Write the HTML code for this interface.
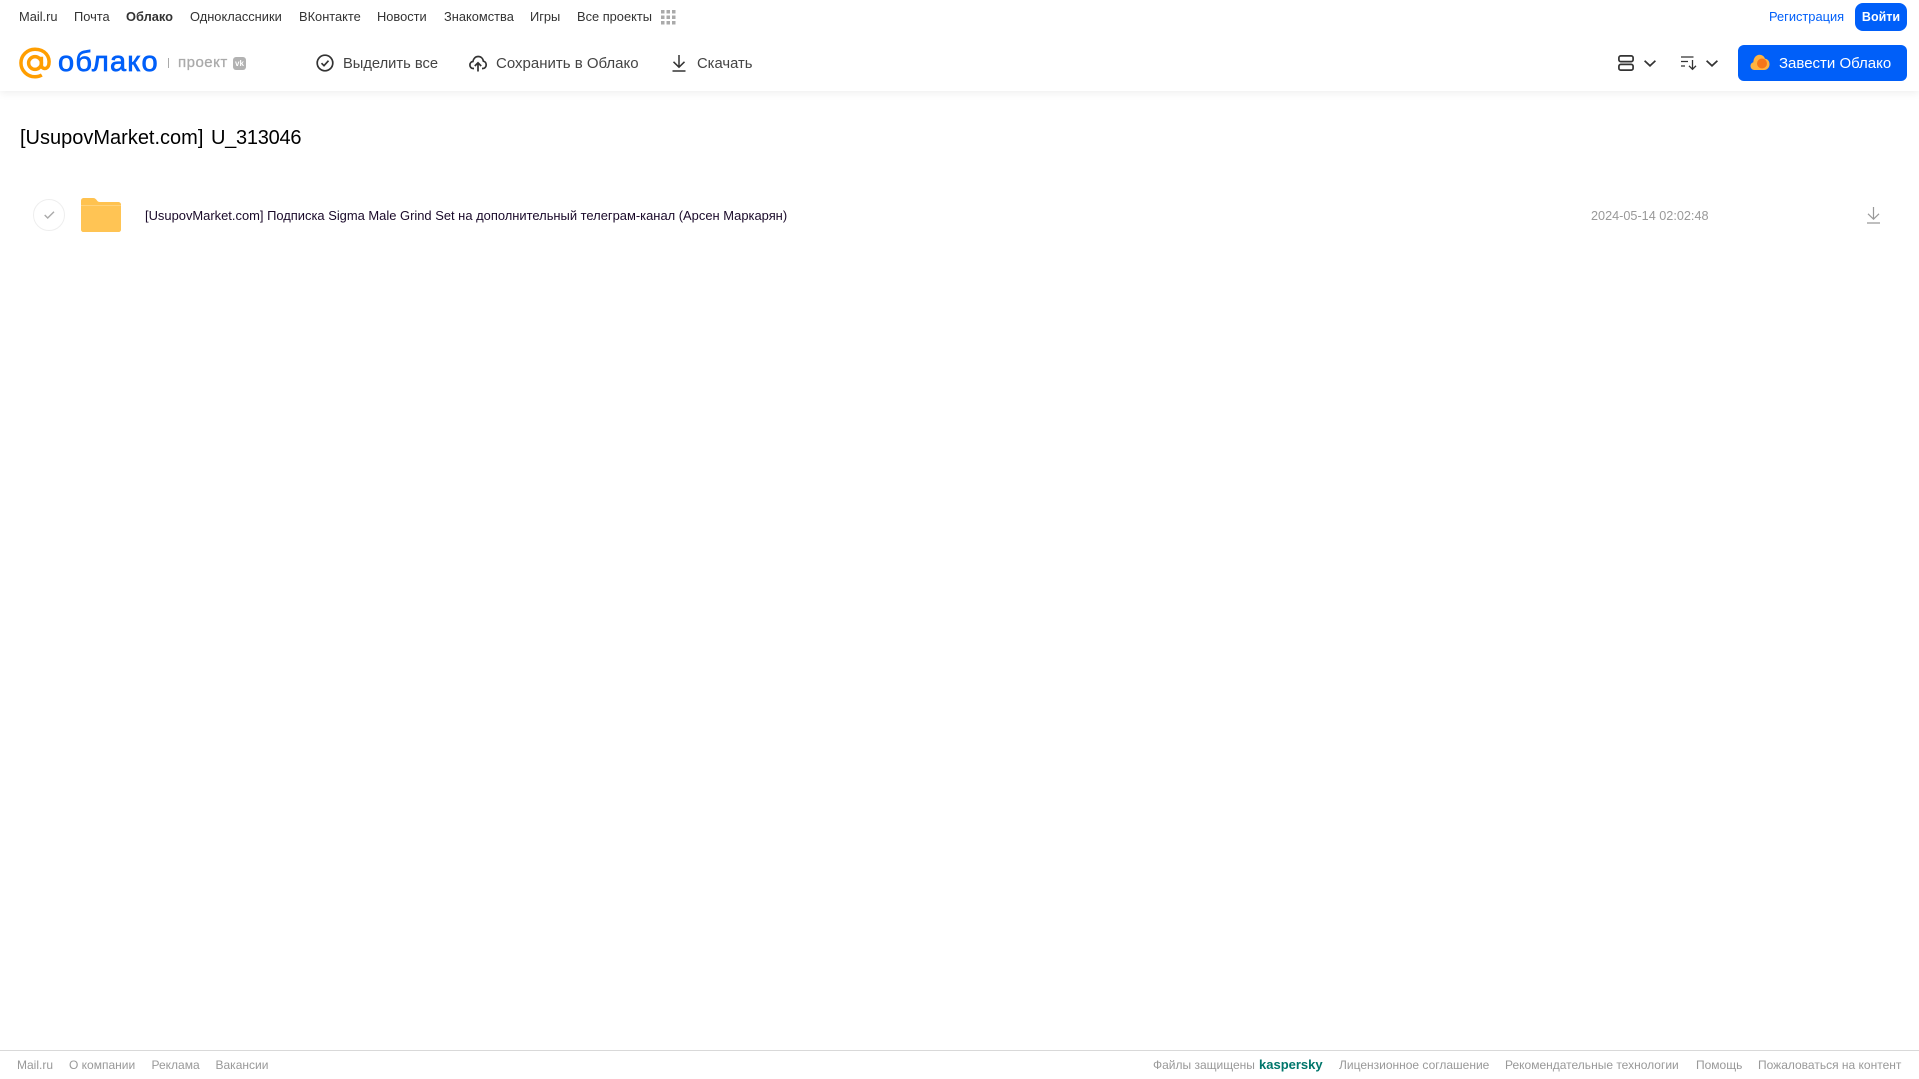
<!DOCTYPE html>
<html lang="ru"><head><meta charset="utf-8"><title>Облако</title>
<style>
html,body{margin:0;padding:0;background:#fff;width:1919px;height:1079px;overflow:hidden}
body{position:relative;font-family:"Liberation Sans",Arial,sans-serif}
.t{position:absolute;white-space:nowrap;line-height:20px}
.n{font-size:12.85px;color:#333;top:7px}
.a{color:#444;top:53.5px}
.f{font-size:12px;color:#999;top:1055px}
svg{position:absolute;overflow:visible}
#hdr{position:absolute;left:0;top:0;width:1919px;height:91px;background:#fff;box-shadow:0 2px 8px rgba(0,0,0,.07)}
.btn{position:absolute;background:#005ff9;color:#fff;text-align:center}
</style></head><body>
<div id="hdr"></div>
<span class="t n" style="left:19px">Mail.ru</span>
<span class="t n" style="left:74px">Почта</span>
<span class="t n" style="left:126px;font-weight:700">Облако</span>
<span class="t n" style="left:190px">Одноклассники</span>
<span class="t n" style="left:299px">ВКонтакте</span>
<span class="t n" style="left:377px">Новости</span>
<span class="t n" style="left:444px">Знакомства</span>
<span class="t n" style="left:530px">Игры</span>
<span class="t n" style="left:577px">Все проекты</span>
<svg style="left:661px;top:10px" width="15" height="15" fill="#aaa"><rect x="0" y="0" width="3.5" height="3.5"/><rect x="5.5" y="0" width="3.5" height="3.5"/><rect x="11" y="0" width="3.5" height="3.5"/><rect x="0" y="5.5" width="3.5" height="3.5"/><rect x="5.5" y="5.5" width="3.5" height="3.5"/><rect x="11" y="5.5" width="3.5" height="3.5"/><rect x="0" y="11" width="3.5" height="3.5"/><rect x="5.5" y="11" width="3.5" height="3.5"/><rect x="11" y="11" width="3.5" height="3.5"/></svg>
<svg style="left:19px;top:47px" width="32" height="32" viewBox="0 0 33 33" fill="none" stroke="#ff9e00" stroke-width="3.6"><circle cx="16.5" cy="16.5" r="6.6"/><path d="M23.1 10v8.5c0 5 6.7 5 7.700-.5 1.400-8-4-15.700-14.300-15.700C8.500 2.300 2 8.700 2 16.500S8.500 30.700 16.500 30.700c2.800 0 5-.6 7-1.800"/></svg>
<span class="t" style="left:58px;top:42px;font-size:29px;line-height:40px;color:#005ff9;letter-spacing:1.2px;-webkit-text-stroke:.7px #005ff9">облако</span>
<div style="position:absolute;left:168px;top:58px;width:1px;height:10px;background:#aaa"></div>
<span class="t" style="left:178px;top:53px;font-size:15px;color:#aaa;letter-spacing:.5px;-webkit-text-stroke:.3px #aaa">проект</span>
<div style="position:absolute;left:233px;top:57px;width:13px;height:13px;border-radius:3px;background:#b2b2b2;color:#fff;font:700 8px/13px 'Liberation Sans',sans-serif;text-align:center">vk</div>
<svg style="left:316px;top:54px" width="18" height="18" fill="none" stroke="#333" stroke-width="1.700"><circle cx="9" cy="9" r="7.800"/><path d="M5.500 9.200l2.500 2.500 4.500-5"/></svg>
<span class="t a" style="left:343px;font-size:14.7px">Выделить все</span>
<svg style="left:469px;top:55px" width="18" height="17" fill="none" stroke="#333" stroke-width="1.700"><path d="M5 13.500H4.300C2 13.500.9 11.800.9 10c0-2 1.400-3.300 3-3.500C4.500 3.500 6.500 1.500 9.200 1.500c2.800 0 4.800 2 5.200 4.700 1.600.3 2.800 1.800 2.800 3.600 0 2-1.400 3.700-3.400 3.700H13"/><path d="M9 16.500V8M5.800 11L9 7.800 12.200 11"/></svg>
<span class="t a" style="left:496px;font-size:15px">Сохранить в Облако</span>
<svg style="left:672px;top:55px" width="14" height="17" fill="none" stroke="#333" stroke-width="1.500"><path d="M7 0v12M1.500 6.800L7 12.200l5.500-5.400M.5 16h13"/></svg>
<span class="t a" style="left:697px;font-size:14.8px">Скачать</span>
<span class="t" style="left:1769px;top:7px;font-size:12.85px;color:#005ff9">Регистрация</span>
<div class="btn" style="left:1855px;top:3px;width:52px;height:28px;border-radius:8px;font-size:12.500px;line-height:28px;font-weight:700">Войти</div>
<svg style="left:1618px;top:55px" width="16" height="16" fill="none" stroke="#333" stroke-width="1.700"><rect x=".9" y=".9" width="14.200" height="5.700" rx="1.800"/><rect x=".9" y="9.400" width="14.200" height="5.700" rx="1.800"/></svg>
<svg style="left:1644px;top:60px" width="12" height="7" fill="none" stroke="#333" stroke-width="1.700"><path d="M.6.8L6 5.800 11.400.8"/></svg>
<svg style="left:1681px;top:56px" width="16" height="14" fill="none" stroke="#333" stroke-width="1.300"><path d="M0 1h12.500M0 5.500h7M0 10h4M11.500 4v9M8 9.800l3.500 3.500L15 9.800"/></svg>
<svg style="left:1706px;top:60px" width="12" height="7" fill="none" stroke="#333" stroke-width="1.700"><path d="M.6.8L6 5.800 11.400.8"/></svg>
<div class="btn" style="left:1738px;top:45px;width:169px;height:36px;border-radius:6px"></div>
<svg style="left:1750px;top:54px" width="20" height="17"><path d="M4.500 16C2 16 .5 14 .5 12c0-2 1.300-3.300 2.800-3.700C3.500 4 6 .8 9.500.8c3 0 4.800 1.900 5.500 4 2.600.2 4.500 2.300 4.500 5.300 0 3.300-2.200 5.900-5.500 5.900z" fill="#ffb340"/><circle cx="12" cy="9.500" r="5" fill="#f5761a"/></svg>
<span class="t" style="left:1779px;top:53.5px;font-size:15px;color:#fff">Завести Облако</span>
<span class="t" style="left:20px;top:125px;font-size:20px;line-height:26px;color:#000;word-spacing:2px">[UsupovMarket.com] <span style="letter-spacing:-.25px">U_313046</span></span>
<div style="position:absolute;left:33px;top:199px;width:30px;height:30px;border:1px solid #eee;border-radius:50%"></div>
<svg style="left:44px;top:211px" width="11" height="8" fill="none" stroke="#aaa" stroke-width="1.400"><path d="M.7 4l3 3L10 .8"/></svg>
<svg style="left:81px;top:198px" width="40" height="34"><path d="M0 3C0 1 1 0 3 0h9c2 0 3 1 4 2.500.6 1 1.400 1.500 3 1.500h18c2 0 3 1 3 3v24c0 2-1 3-3 3H3c-2 0-3-1-3-3z" fill="#ffc24f"/><path d="M0 8h40v23c0 2-1 3-3 3H3c-2 0-3-1-3-3z" fill="#ffc454"/><rect x="0" y="7" width="40" height="1" fill="#ffd27c"/></svg>
<span class="t" style="left:145px;top:205.500px;font-size:12.93px;color:#1a0a2a">[UsupovMarket.com] Подписка Sigma Male Grind Set на дополнительный телеграм-канал (Арсен Маркарян)</span>
<span class="t" style="left:1591px;top:205.500px;font-size:12.66px;color:#999">2024-05-14 02:02:48</span>
<svg style="left:1867px;top:207px" width="13" height="17" fill="none" stroke="#999" stroke-width="1.200"><path d="M6.500 0v12M1 6.800l5.500 5.400L12 6.800M0 16h13"/></svg>
<div style="position:absolute;left:0;top:1050px;width:1919px;height:1px;background:#d9d9d9"></div>
<span class="t f" style="left:17px">Mail.ru</span>
<span class="t f" style="left:69px">О компании</span>
<span class="t f" style="left:151.500px">Реклама</span>
<span class="t f" style="left:215.500px">Вакансии</span>
<span class="t f" style="left:1153px">Файлы защищены</span>
<span class="t" style="left:1259px;top:1055px;font-size:13px;font-weight:700;color:#00766b">kaspersky</span>
<span class="t f" style="left:1339px">Лицензионное соглашение</span>
<span class="t f" style="left:1505px">Рекомендательные технологии</span>
<span class="t f" style="left:1696px">Помощь</span>
<span class="t f" style="left:1758px">Пожаловаться на контент</span>
</body></html>
